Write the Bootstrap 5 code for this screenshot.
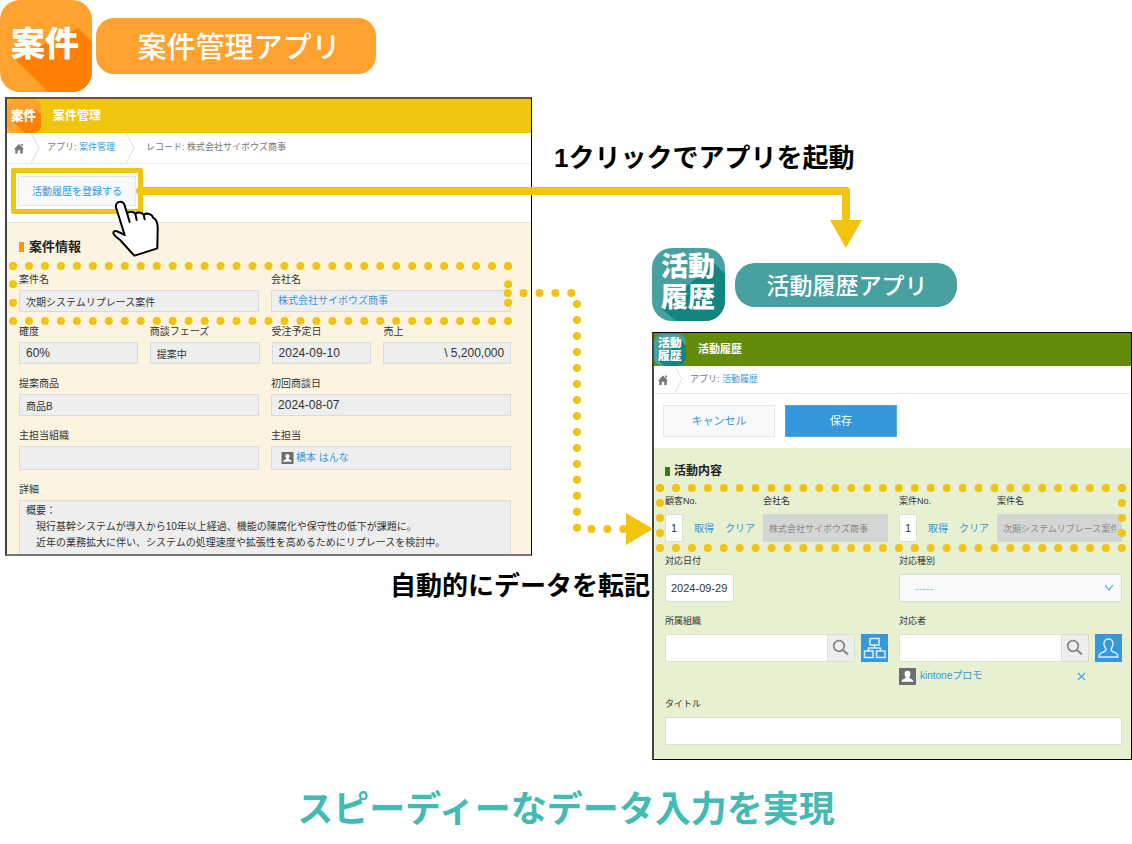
<!DOCTYPE html>
<html lang="ja">
<head>
<meta charset="utf-8">
<meta name="viewport" content="width=device-width, initial-scale=1">
<title>スピーディーなデータ入力を実現</title>
<link href="https://cdn.jsdelivr.net/npm/bootstrap@5.3.0/dist/css/bootstrap.min.css" rel="stylesheet">
<style>
  :root { --accent: #f1c40f; --sky: #3498db; --orange: #ffa22f; --teal: #48a0a0; }
  body { font-family: "Liberation Sans", "Noto Sans CJK JP", sans-serif; color: #333; background: #fff; }
  a { color: var(--sky); text-decoration: none; }
  .diagram { grid-template-columns: 532fr 121fr 479fr; align-items: start; }
  .flow-left { grid-column: 1 / 3; grid-row: 1; }
  .flow-right { grid-column: 2 / 4; grid-row: 1; }
  .left-part { width: 81.5%; }
  .right-part { margin-left: 20%; }
  .pill { color: #fff; font-weight: 500; border-radius: 18px; font-family: "Noto Sans CJK JP", sans-serif; }
  .pill-deal { background: var(--orange); width: 280px; height: 56px; font-size: 29px; margin: 18px 0 0 4px; padding-left: 6px; }
  .pill-act { background: var(--teal); width: 222px; height: 44px; border-radius: 20px; font-size: 23px; margin-left: 10px; padding-left: 2px; }
  .note { color: #000; font: 700 26px/36px "Liberation Sans", "Noto Sans CJK JP", sans-serif; white-space: nowrap; margin: 0; }
  .note-start { padding: 140px 0 72px 22px; }
  .note-copy { padding: 12px 3px 0 0; }
  .caption-main { color: #43bab4; font: 700 36px/48px "Noto Sans CJK JP", sans-serif; margin-top: 22px; }
  .logo text { font-family: "Noto Sans CJK JP", sans-serif; font-weight: 900; fill: #fff; text-anchor: middle; }

  /* application windows */
  .app { border: 1px solid #000; border-left: 2px solid #444; }
  .app-deal { margin: 5px 0 0 5px; border-top: 2px solid #6b5a10; border-bottom: 2px solid #777; }
  .app-act { margin-top: 11px; }
  .app-title { color: #fff; font-weight: 700; line-height: 1; }
  .app-deal .app-title { background: var(--accent); height: 34px; font-size: 12px; }
  .app-act .app-title { background: #628c0a; height: 33px; font-size: 11px; }
  .crumbs { color: #777; border-bottom: 1px solid #e8e8e8; font-size: 9px; gap: 7px; }
  .app-deal .crumbs { height: 31px; padding-left: 7px; }
  .app-act .crumbs { height: 28px; padding-left: 4px; }
  .tools-deal { height: 58px; padding: 4px 4px 0; }
  .tools-act { height: 54px; padding: 0 9px; gap: 10px; }
  .btn-flat { background: #f7f9fa; border: 1px solid #e3e7e8; color: var(--sky); border-radius: 0; padding: 0; }
  .btn-save { background: var(--sky); color: #fff; border: 1px solid #54a9e2; border-radius: 0; padding: 0; }
  .tools-deal .btn { width: 118px; height: 30px; font-size: 10px; }
  .tools-act .btn { width: 112px; height: 32px; font-size: 11px; }
  .focus-box { border: 5px solid var(--accent); width: 132px; height: 46px; border-radius: 2px; padding: 3px 2px; }
  .hand { left: 95px; top: 26px; }

  .form-deal { background: #fcf4e1; border-top: 1px solid #e6e6e6; padding: 14px 20px 0 12px; }
  .form-act { background: #e7f0d0; padding: 13px 9px 14px 11px; }
  .sect { font-weight: 700; line-height: 20px; color: #222; margin: 0; }
  .form-deal .sect { font-size: 13px; margin-bottom: 13px; gap: 5px; }
  .form-act .sect { font-size: 12px; margin-bottom: 13px; gap: 4px; }
  .tick { width: 5px; height: 10px; background: #ff9800; }
  .form-act .tick { background: #38791a; height: 9px; }
  .form-label { display: block; margin: 0; color: #333; white-space: nowrap; }
  .form-deal .form-label { font-size: 10px; line-height: 20px; }
  .form-act .form-label { font-size: 9px; line-height: 14px; margin-bottom: 6px; }
  .half { grid-template-columns: 1fr 1fr; column-gap: 12px; }
  .quarter { grid-template-columns: 119fr 110fr 100fr 128fr; column-gap: 12px; }
  .form-deal .line { margin-bottom: 10px; }
  .form-act .line { margin-bottom: 12px; }
  .form-act .half { column-gap: 11px; }
  .look { grid-template-columns: 98px 1fr; }
  .look-tools { font-size: 10px; gap: 11px; white-space: nowrap; }

  .box { display: block; width: 100%; min-width: 0; border-radius: 0; border: 1px solid #d8dadb; background: #eee; color: #333; padding: 0 6px; font-size: 10px; line-height: 20px; height: 22px; }
  .box:focus { box-shadow: none; }
  .box-person { height: 24px; line-height: 22px; padding-left: 9px; }
  .box-num { font-size: 12px; }
  .box-note { height: 54px; border-bottom: 0; line-height: 16px; padding: 2px 6px 0; resize: none; overflow: hidden; }
  .form-act .box { height: 28px; background: #fff; font-size: 11px; border-color: #dadfcf; padding: 0 5px; }
  .form-act .box-off { background: #d4d6d5; color: #888; font-size: 9px; border-color: #d4d6d5; }
  .form-act .box-no { width: 18px; padding: 0; text-align: center; }
  .form-act .box-date { width: 69px; }
  .form-act .box-pick { background: #f7f9fb; color: #8bc2ea; padding-left: 15px; -webkit-appearance: none; appearance: none; }
  .chev { right: 8px; top: 10px; pointer-events: none; }
  .btn-find { width: 27px; height: 28px; background: #eee; border: 1px solid #dadfcf; border-left: 0; border-radius: 0; padding: 0; }
  .btn-pick { width: 27px; height: 28px; background: var(--sky); border: 0; border-radius: 0; padding: 0; margin-left: 6px; }
  .btn-x { border: 0; padding: 0; line-height: 1; margin-right: 36px; }
  .person-row { margin-top: 5px; height: 18px; font-size: 10px; line-height: 18px; }
  .person-gap { gap: 2px; }

  /* dotted frames and arrows */
  .dots line { stroke: var(--accent); stroke-width: 8; stroke-linecap: round; stroke-dasharray: 0 1; }
  .dots { overflow: visible; pointer-events: none; z-index: 2; }
  .dots-deal { left: -6px; top: -4px; width: calc(100% + 3px); height: 55px; }
  .dots-act { left: -5px; top: -6px; width: calc(100% + 5px); height: 60px; }
  .arrows { pointer-events: none; z-index: 3; overflow: visible; }
</style>
</head>
<body>
<svg width="0" height="0" class="position-absolute" aria-hidden="true">
  <symbol id="home" viewBox="0 0 12 12"><path fill="#777" d="M6 .5 12 6.500h-1.500V12H7.500V8H4.500v4h-3V6.500H0zM8.500.5h2V4l-2-2z"/></symbol>
  <symbol id="person" viewBox="0 0 16 16"><path fill="#6b6f70" d="M0 0h16v16H0z"/><path fill="#fff" d="M8 2.500c1.900 0 2.900 1.300 2.700 3.300-.1 1.500-.8 2.200-1.100 2.900 0 1.700 3.900 1.500 4 4.300H2.400c.1-2.800 4-2.600 4-4.300-.3-.7-1-1.400-1.100-2.900C5.100 3.800 6.100 2.500 8 2.500z"/></symbol>
  <symbol id="find" viewBox="0 0 18 18"><circle cx="7" cy="7" r="5.300" fill="none" stroke="#888" stroke-width="1.800"/><path d="m11 11 5 4.500" stroke="#888" stroke-width="2.200"/></symbol>
</svg>

<main class="diagram d-grid position-relative">
  <section class="flow-left">
    <div class="left-part">
      <header class="d-flex">
        <svg class="logo flex-shrink-0" width="92" height="92" viewBox="0 0 92 92" role="img" aria-label="案件">
          <clipPath id="c1"><rect width="92" height="92" rx="20"/></clipPath>
          <g clip-path="url(#c1)"><path fill="#ffa22f" d="M0 0h92v92H0z"/><path fill="#ff7f04" d="M78 28 92 42v50H48L14 58z"/></g>
          <text x="45" y="56" font-size="34">案件</text>
        </svg>
        <div class="pill pill-deal d-flex align-items-center justify-content-center">案件管理アプリ</div>
      </header>

      <div class="app app-deal">
        <div class="app-title d-flex align-items-center">
          <svg class="logo me-2" width="34" height="34" viewBox="0 0 92 92" aria-hidden="true">
            <g clip-path="url(#c1)"><path fill="#ffa22f" d="M0 0h92v92H0z"/><path fill="#ff7f04" d="M78 28 92 42v50H48L14 58z"/></g>
            <text x="45" y="56" font-size="34">案件</text>
          </svg>
          <span class="ms-1">案件管理</span>
        </div>
        <nav class="crumbs d-flex align-items-center" aria-label="パンくず">
          <a href="#" class="d-flex" aria-label="ホーム"><svg width="10" height="11"><use href="#home"/></svg></a>
          <svg width="9" height="30" fill="none" stroke="#ddd"><path d="m0 0 8 15-8 15"/></svg>
          <span>アプリ: <a href="#">案件管理</a></span>
          <svg width="9" height="30" class="ms-1 me-1" fill="none" stroke="#ddd"><path d="m0 0 8 15-8 15"/></svg>
          <span>レコード: 株式会社サイボウズ商事</span>
        </nav>
        <div class="tools-deal">
          <div class="focus-box position-relative">
            <button type="button" class="btn btn-flat">活動履歴を登録する</button>
            <svg class="hand position-absolute z-3" width="50" height="60" viewBox="333 118 150 180" fill="#fff" stroke="#000" stroke-width="6" stroke-linejoin="round" stroke-linecap="round" aria-hidden="true">
              <path d="M403 288 363 244C355 234 340 231 340 218 344 210 354 216 374 226L348 143C344 126 370 118 374 138L381 160C392 153 401 157 406 162 416 156 426 159 431 165 440 159 457 162 459 174 470 177 474 196 473 210L472 266Z"/>
              <path d="m381 160 8 27m17-25 4 19m21-16 3 14" fill="none"/>
            </svg>
          </div>
        </div>
        <form class="form-deal">
          <h2 class="sect d-flex align-items-center"><span class="tick"></span><span>案件情報</span></h2>
          <div class="line half d-grid position-relative">
            <div><label class="form-label" for="dName">案件名</label><input class="box" id="dName" readonly value="次期システムリプレース案件"></div>
            <div><span class="form-label">会社名</span><div class="box"><a href="#">株式会社サイボウズ商事</a></div></div>
            <svg class="dots dots-deal position-absolute" aria-hidden="true">
              <line x1="0" y1="0" x2="100%" y2="0" pathLength="31.010"/><line x1="0" y1="100%" x2="100%" y2="100%" pathLength="31.010"/>
              <line x1="0" y1="0" x2="0" y2="100%" pathLength="3"/><line x1="100%" y1="0" x2="100%" y2="100%" pathLength="3"/>
            </svg>
          </div>
          <div class="line quarter d-grid">
            <div><label class="form-label" for="dProb">確度</label><input class="box box-num" id="dProb" readonly value="60%"></div>
            <div><label class="form-label" for="dPhase">商談フェーズ</label><input class="box" id="dPhase" readonly value="提案中"></div>
            <div><label class="form-label" for="dOrder">受注予定日</label><input class="box box-num" id="dOrder" readonly value="2024-09-10"></div>
            <div><label class="form-label" for="dSales">売上</label><input class="box box-num text-end" id="dSales" readonly value="\ 5,200,000"></div>
          </div>
          <div class="line half d-grid">
            <div><label class="form-label" for="dProd">提案商品</label><input class="box" id="dProd" readonly value="商品B"></div>
            <div><label class="form-label" for="dFirst">初回商談日</label><input class="box box-num" id="dFirst" readonly value="2024-08-07"></div>
          </div>
          <div class="line half d-grid">
            <div><label class="form-label" for="dOrg">主担当組織</label><input class="box box-person" id="dOrg" readonly></div>
            <div><span class="form-label">主担当</span><div class="box box-person person-gap d-flex align-items-center"><svg width="13" height="12" aria-hidden="true"><use href="#person"/></svg><a href="#">橋本 はんな</a></div></div>
          </div>
          <label class="form-label" for="dNote">詳細</label>
          <textarea class="box box-note" id="dNote" rows="3" readonly>概要：
　現行基幹システムが導入から10年以上経過、機能の陳腐化や保守性の低下が課題に。
　近年の業務拡大に伴い、システムの処理速度や拡張性を高めるためにリプレースを検討中。</textarea>
        </form>
      </div>
    </div>
    <p class="note note-copy text-end">自動的にデータを転記</p>
  </section>

  <section class="flow-right">
    <p class="note note-start">1クリックでアプリを起動</p>
    <div class="right-part">
      <header class="d-flex">
        <svg class="logo flex-shrink-0" width="73" height="73" viewBox="0 0 73 73" role="img" aria-label="活動履歴">
          <clipPath id="c2"><rect width="73" height="73" rx="20"/></clipPath>
          <g clip-path="url(#c2)"><path fill="#48a0a0" d="M0 0h73v73H0z"/><path fill="#138580" d="M62 15 73 26v47H24L9 60z"/></g>
          <text x="36" y="28" font-size="27">活動</text><text x="36" y="59" font-size="27">履歴</text>
        </svg>
        <div class="pill pill-act d-flex align-items-center justify-content-center align-self-center">活動履歴アプリ</div>
      </header>

      <div class="app app-act">
        <div class="app-title d-flex align-items-center">
          <svg class="logo me-2" width="32" height="32" viewBox="0 0 73 73" aria-hidden="true">
            <g clip-path="url(#c2)"><path fill="#48a0a0" d="M0 0h73v73H0z"/><path fill="#138580" d="M62 15 73 26v47H24L9 60z"/></g>
            <text x="36" y="29" font-size="27">活動</text><text x="36" y="60" font-size="27">履歴</text>
          </svg>
          <span class="ms-1">活動履歴</span>
        </div>
        <nav class="crumbs d-flex align-items-center" aria-label="パンくず">
          <a href="#" class="d-flex" aria-label="ホーム"><svg width="10" height="10"><use href="#home"/></svg></a>
          <svg width="8" height="27" fill="none" stroke="#ddd"><path d="m0 0 7 13-7 14"/></svg>
          <span>アプリ: <a href="#">活動履歴</a></span>
        </nav>
        <div class="tools-act d-flex align-items-center">
          <button type="button" class="btn btn-flat">キャンセル</button>
          <button type="button" class="btn btn-save">保存</button>
        </div>
        <form class="form-act">
          <h2 class="sect d-flex align-items-center"><span class="tick"></span><span>活動内容</span></h2>
          <div class="line half d-grid position-relative">
            <div class="look d-grid">
              <div><label class="form-label" for="aCust">顧客No.</label><div class="look-tools d-flex align-items-center"><input class="box box-no" id="aCust" value="1"><a href="#">取得</a><a href="#">クリア</a></div></div>
              <div><label class="form-label" for="aComp">会社名</label><input class="box box-off" id="aComp" disabled value="株式会社サイボウズ商事"></div>
            </div>
            <div class="look d-grid">
              <div><label class="form-label" for="aDeal">案件No.</label><div class="look-tools d-flex align-items-center"><input class="box box-no" id="aDeal" value="1"><a href="#">取得</a><a href="#">クリア</a></div></div>
              <div><label class="form-label" for="aDealName">案件名</label><input class="box box-off" id="aDealName" disabled value="次期システムリプレース案件"></div>
            </div>
            <svg class="dots dots-act position-absolute" aria-hidden="true">
              <line x1="0" y1="0" x2="100%" y2="0" pathLength="29.010"/><line x1="0" y1="100%" x2="100%" y2="100%" pathLength="29.010"/>
              <line x1="0" y1="0" x2="0" y2="100%" pathLength="4"/><line x1="100%" y1="0" x2="100%" y2="100%" pathLength="4"/>
            </svg>
          </div>
          <div class="line half d-grid">
            <div><label class="form-label" for="aDate">対応日付</label><input class="box box-date" id="aDate" value="2024-09-29"></div>
            <div><label class="form-label" for="aType">対応種別</label>
              <div class="position-relative"><select class="box box-pick" id="aType"><option>-----</option></select>
                <svg class="chev position-absolute" width="10" height="8" fill="none" stroke="#7dbbe8" stroke-width="1.500"><path d="m1 1 4 5 4-5"/></svg></div></div>
          </div>
          <div class="line half d-grid">
            <div><label class="form-label" for="aOrg">所属組織</label>
              <div class="d-flex"><input class="box flex-fill" id="aOrg">
                <button type="button" class="btn btn-find flex-shrink-0" aria-label="検索"><svg width="18" height="18" class="d-block m-auto"><use href="#find"/></svg></button>
                <button type="button" class="btn btn-pick flex-shrink-0" aria-label="組織を選択"><svg width="27" height="28" class="d-block" fill="none" stroke="#d6edfc" stroke-width="1.500"><path d="M9 4.500h9v6.500H9zM3.500 17h8.500v6.500H3.500zM15.500 17H24v6.500h-8.500zM13.500 11v3M7.500 17v-3h12v3"/></svg></button></div></div>
            <div><label class="form-label" for="aUser">対応者</label>
              <div class="d-flex"><input class="box flex-fill" id="aUser">
                <button type="button" class="btn btn-find flex-shrink-0" aria-label="検索"><svg width="18" height="18" class="d-block m-auto"><use href="#find"/></svg></button>
                <button type="button" class="btn btn-pick flex-shrink-0" aria-label="ユーザーを選択"><svg width="27" height="28" class="d-block" fill="none" stroke="#d6edfc" stroke-width="1.500"><path d="M13.500 5c3 0 4.700 2 4.500 5-.2 2.500-1.500 3.500-1.900 5.200-.4 2.300 1 2.500 3.400 3.200 2.500.7 3.500 1.600 3.500 4.600H4c0-3 1-3.900 3.500-4.600 2.400-.7 3.800-.9 3.400-3.200C10.500 13.500 9.200 12.500 9 10c-.2-3 1.500-5 4.500-5z"/></svg></button></div>
              <div class="person-row d-flex align-items-center"><svg width="17" height="17" class="me-1" aria-hidden="true"><use href="#person"/></svg><a href="#" class="flex-fill">kintoneプロモ</a>
                <button type="button" class="btn btn-x" aria-label="削除"><svg width="9" height="9" class="d-block"><path d="m1 1 7 7m0-7-7 7" stroke="#4aa5de" stroke-width="1.200"/></svg></button></div></div>
          </div>
          <label class="form-label" for="aTitle">タイトル</label>
          <input class="box" id="aTitle">
        </form>
      </div>
    </div>
  </section>

  <!-- horizontal positions follow the width of the diagram -->
  <svg class="arrows position-absolute top-0 start-0 w-100 h-100" aria-hidden="true">
    <g stroke="#f1c40f" stroke-width="8" stroke-linecap="round">
      <line x1="140" y1="191" x2="74.730%" y2="191"/>
      <line x1="74.730%" y1="191" x2="74.730%" y2="218"/>
      <line x1="44.850%" y1="293" x2="50.480%" y2="293" stroke-dasharray="0 1" pathLength="4.010"/>
      <line x1="50.970%" y1="304" x2="50.970%" y2="528" stroke-dasharray="0 1" pathLength="14.010"/>
      <line x1="52.250%" y1="529" x2="55.080%" y2="529" stroke-dasharray="0 1" pathLength="2.010"/>
    </g>
    <svg x="74.730%" y="220" overflow="visible"><path fill="#f1c40f" d="M-16 0h32L0 28z"/></svg>
    <svg x="55.300%" y="529" overflow="visible"><path fill="#f1c40f" d="M0-16v32L27 0z"/></svg>
  </svg>
</main>
<h1 class="caption-main text-center mb-3">スピーディーなデータ入力を実現</h1>
<script src="https://cdn.jsdelivr.net/npm/bootstrap@5.3.0/dist/js/bootstrap.bundle.min.js"></script>
</body>
</html>
